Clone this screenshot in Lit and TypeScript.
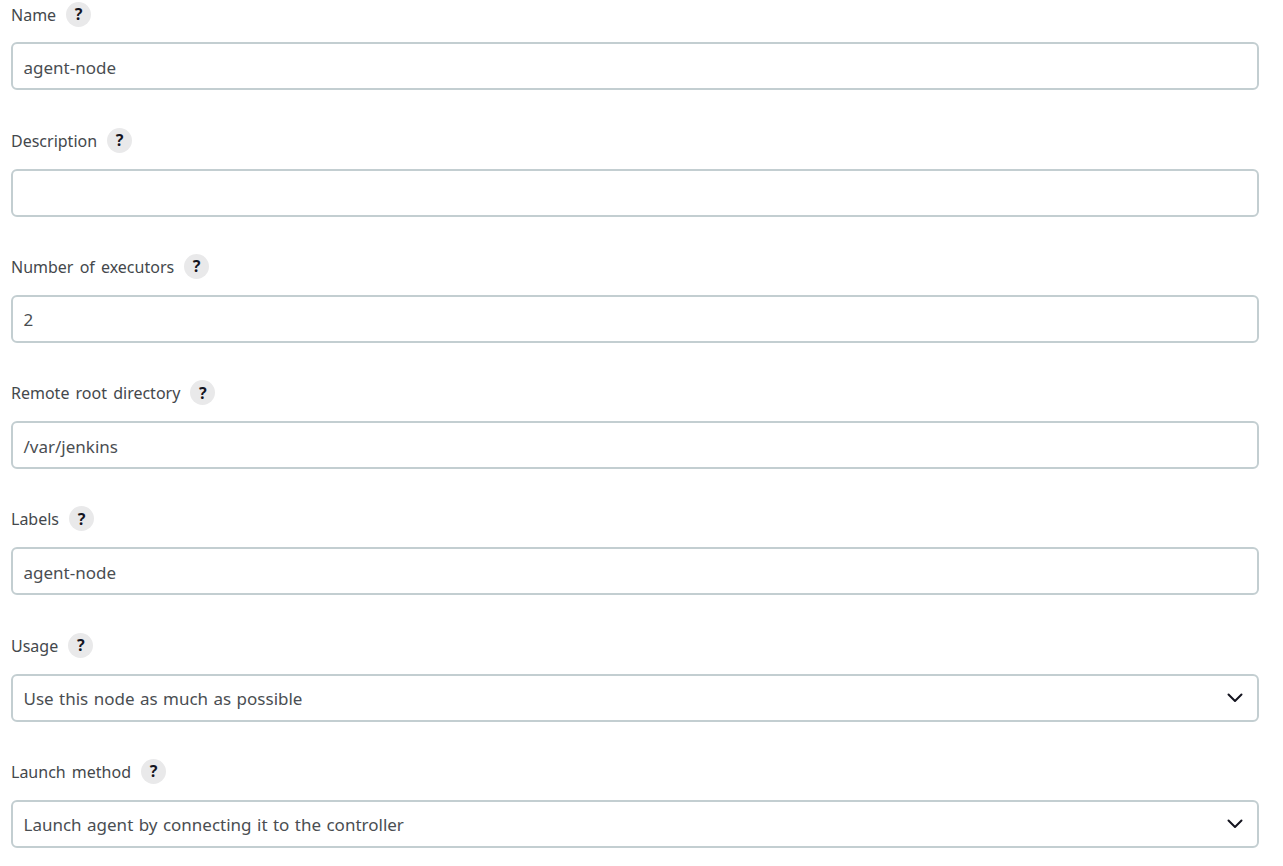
import { LitElement, html, css } from 'lit';
import { customElement } from 'lit/decorators.js';

type Field = { label: string; value: string; select?: boolean };

const FIELDS: Field[] = [
  { label: 'Name', value: 'agent-node' },
  { label: 'Description', value: '' },
  { label: 'Number of executors', value: '2' },
  { label: 'Remote root directory', value: '/var/jenkins' },
  { label: 'Labels', value: 'agent-node' },
  { label: 'Usage', value: 'Use this node as much as possible', select: true },
  { label: 'Launch method', value: 'Launch agent by connecting it to the controller', select: true },
];

@customElement('app-root')
export class AppRoot extends LitElement {
  static styles = css`
    :host {
      display: block;
      height: 866px;
      overflow: hidden;
      background: #fff;
      font-family: 'Noto Sans', 'Noto Sans CJK KR', sans-serif;
      font-size: 16px;
      color: #333;
    }

    .form {
      display: flex;
      flex-direction: column;
      gap: 37.35px;
      padding: 1.5px 24px 0 11px;
    }

    .label-row {
      display: flex;
      align-items: center;
      gap: 10px;
      height: 26px;
      margin-bottom: 14.9px;
      line-height: 26px;
      color: #44484c;
      word-spacing: 2px;
    }

    .help {
      width: 25px;
      height: 25px;
      margin-bottom: 1px;
      border-radius: 50%;
      background: #e9e9ea;
      color: #14141f;
      display: flex;
      align-items: center;
      justify-content: center;
      font-size: 16px;
      font-weight: 700;
    }

    .control {
      box-sizing: border-box;
      height: 48px;
      border: 2px solid #c3ced1;
      border-radius: 6px;
      padding: 2px 11px 0 10.5px;
      display: flex;
      align-items: center;
      justify-content: space-between;
      color: #4a4e52;
      font-size: 17px;
      word-spacing: 1px;
      white-space: pre;
    }

    .control svg {
      width: 18px;
      height: 18px;
      margin: -2px 2px 0 0;
      color: #14141f;
    }
  `;

  render() {
    return html`
      <div class="form">
        ${FIELDS.map(
          (f) => html`
            <div class="field">
              <div class="label-row">
                <span>${f.label}</span>
                <span class="help">?</span>
              </div>
              <div class="control">
                <span>${f.value}</span>
                ${f.select
                  ? html`<svg viewBox="0 0 18 18" fill="none" stroke="currentColor" stroke-width="2" stroke-linecap="round" stroke-linejoin="round">
                      <path d="M2.5 5.5 9 12l6.5-6.5" />
                    </svg>`
                  : ''}
              </div>
            </div>
          `
        )}
      </div>
    `;
  }
}
